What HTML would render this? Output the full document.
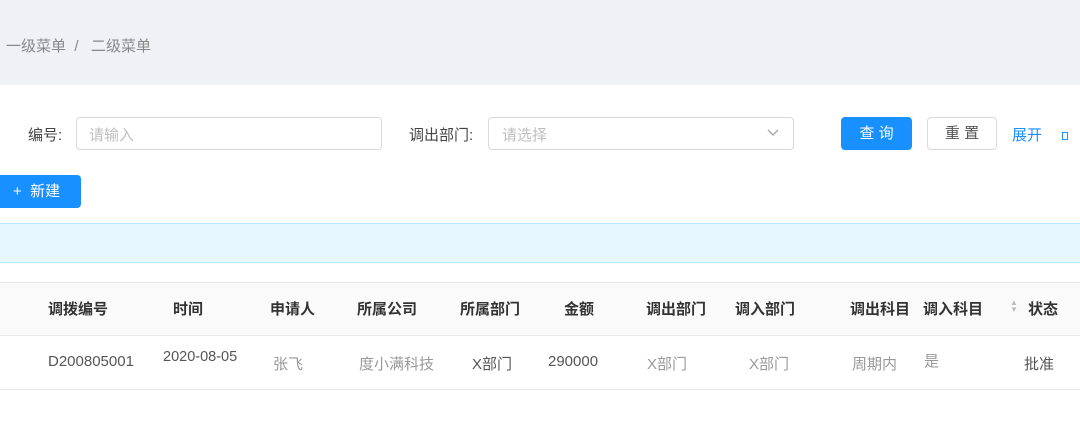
<!DOCTYPE html>
<html><head><meta charset="utf-8"><style>
*{margin:0;padding:0;box-sizing:border-box}
body{width:1080px;height:426px;background:#fff;font-family:"Liberation Sans","Noto Sans CJK SC",sans-serif;font-size:15px;color:#333;position:relative;overflow:hidden}
.a{position:absolute;white-space:nowrap}
.top{left:0;top:0;width:1080px;height:85px;background:#f0f1f5}
.inp{border:1px solid #d9d9d9;border-radius:4px;background:#fff}
.ph{color:#bfbfbf}
.th{font-weight:bold;color:#333;top:298px}
.td{color:#999;top:353px}
</style></head><body>
<div class="a top"></div>
<div class="a" style="left:6px;top:35px;color:#888">一级菜单 &nbsp;/&nbsp;&nbsp; 二级菜单</div>

<div class="a" style="left:28px;top:124px;color:#444">编号:</div>
<div class="a inp" style="left:76px;top:117px;width:306px;height:33px"></div>
<div class="a ph" style="left:89px;top:124px">请输入</div>
<div class="a" style="left:409px;top:124px;color:#444">调出部门:</div>
<div class="a inp" style="left:488px;top:117px;width:306px;height:33px"></div>
<div class="a ph" style="left:502px;top:124px">请选择</div>
<svg class="a" style="left:767px;top:129px" width="12" height="8"><path d="M1 1l5 5 5-5" stroke="#aaa" stroke-width="1.4" fill="none"/></svg>
<div class="a" style="left:841px;top:117px;width:71px;height:33px;background:#1890ff;border-radius:4px;color:#fff;text-align:center;line-height:33px">查 询</div>
<div class="a inp" style="left:927px;top:117px;width:70px;height:33px;text-align:center;line-height:31px;color:#555">重 置</div>
<div class="a" style="left:1012px;top:124px;color:#1890ff">展开</div>
<div class="a" style="left:1062px;top:132px;width:6px;height:8px;border:1px solid #1890ff"></div>

<div class="a" style="left:0;top:175px;width:81px;height:33px;background:#1890ff;border-radius:0 4px 4px 0;color:#fff;line-height:33px;padding-left:13px">+&nbsp; 新建</div>

<div class="a" style="left:0;top:223px;width:1080px;height:40px;background:#e6f7ff;border-top:1px solid #bae7ff;border-bottom:1px solid #bae7ff"></div>

<div class="a" style="left:0;top:282px;width:1080px;height:54px;background:#fafafa;border-top:1px solid #e8e8e8;border-bottom:1px solid #e8e8e8"></div>
<div class="a" style="left:0;top:389px;width:1080px;height:1px;background:#e8e8e8"></div>

<div class="a th" style="left:48px">调拨编号</div>
<div class="a th" style="left:173px">时间</div>
<div class="a th" style="left:270px">申请人</div>
<div class="a th" style="left:357px">所属公司</div>
<div class="a th" style="left:460px">所属部门</div>
<div class="a th" style="left:564px">金额</div>
<div class="a th" style="left:646px">调出部门</div>
<div class="a th" style="left:735px">调入部门</div>
<div class="a th" style="left:850px">调出科目</div>
<div class="a th" style="left:923px">调入科目</div>
<div class="a" style="left:1010px;top:299px;font-size:8px;color:#bbb;line-height:7px">▲<br>▼</div>
<div class="a th" style="left:1028px">状态</div>

<div class="a td" style="left:48px;color:#555">D200805001</div>
<div class="a td" style="left:163px;top:349px;color:#555;font-size:14.5px">2020-08-05</div>
<div class="a td" style="left:273px">张飞</div>
<div class="a td" style="left:359px">度小满科技</div>
<div class="a td" style="left:472px;color:#555">X部门</div>
<div class="a td" style="left:548px;color:#555">290000</div>
<div class="a td" style="left:647px">X部门</div>
<div class="a td" style="left:749px">X部门</div>
<div class="a td" style="left:852px">周期内</div>
<div class="a td" style="left:924px;top:350px">是</div>
<div class="a td" style="left:1024px;color:#555">批准</div>
</body></html>
